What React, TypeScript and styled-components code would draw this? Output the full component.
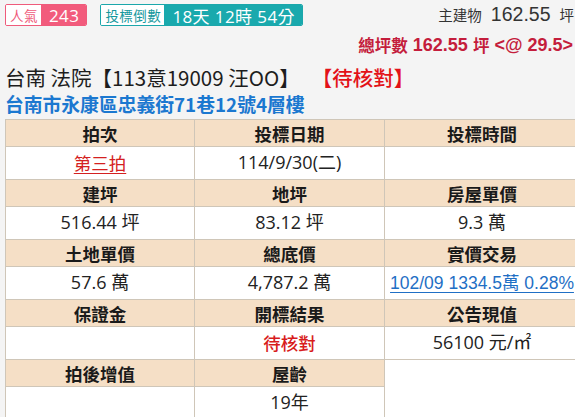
import React from "react";
import styled, { createGlobalStyle } from "styled-components";

const Global = createGlobalStyle`
  html, body { margin: 0; padding: 0; background: #f4f4f4; }
  body { font-family: "Noto Sans CJK TC", "Open Sans", sans-serif; color: #222; overflow: hidden; }
`;

const Page = styled.div`
  padding: 4px 0 0 5px;
  width: 570px;
`;

const TopRow = styled.div`
  display: flex;
  align-items: flex-start;
  justify-content: space-between;
  height: 23px;
`;

const Badges = styled.div`
  display: flex;
  gap: 13px;
`;

const Badge = styled.div<{ $color: string }>`
  display: flex;
  align-items: stretch;
  height: 22px;
  border: 1px solid ${(p) => p.$color};
  border-radius: 2px;
  box-sizing: border-box;
  overflow: hidden;
`;

const BadgeLabel = styled.span<{ $color: string }>`
  display: flex;
  align-items: center;
  padding: 0 3px 0 4px;
  background: #fff;
  color: ${(p) => p.$color};
  font-size: 13.5px;
  letter-spacing: 0.5px;
`;

const BadgeValue = styled.span<{ $color: string }>`
  display: flex;
  align-items: center;
  padding: 0 7px 0 8px;
  background: ${(p) => p.$color};
  color: #fff;
  font-family: "Open Sans", "Noto Sans CJK TC", sans-serif;
  font-size: 17px;
  letter-spacing: 0.4px;
`;

const Cjk = styled.span<{ $size: number }>`
  font-family: "Noto Sans CJK TC", sans-serif;
  font-size: ${(p) => p.$size}px;
`;

const MainArea = styled.div`
  font-family: "Liberation Sans", "Noto Sans CJK TC", sans-serif;
  font-size: 19.5px;
  line-height: 20px;
  color: #333;
  white-space: nowrap;
  margin-right: 1px;
`;

const Gap = styled.span`
  display: inline-block;
  width: 9px;
`;

const TotalRow = styled.div`
  display: flex;
  justify-content: flex-end;
  align-items: center;
  height: 28px;
  margin-top: 4px;
  margin-right: 2px;
  white-space: nowrap;
  font-family: "Liberation Sans", "Noto Sans CJK TC", sans-serif;
  font-size: 18px;
  font-weight: bold;
  color: #c41d3c;
`;

const Title = styled.div`
  display: flex;
  align-items: center;
  height: 28px;
  margin-top: 4px;
  font-size: 20.5px;
  color: #1d1d1d;
  white-space: nowrap;
`;

const Status = styled.span`
  color: #e31218;
  margin-left: 12px;
  font-weight: 500;
`;

const Address = styled.div`
  height: 24px;
  display: flex;
  align-items: center;
  font-size: 18.8px;
  font-weight: bold;
  color: #1b78d0;
  white-space: nowrap;
`;

const Table = styled.table`
  border-collapse: collapse;
  width: 574px;
  table-layout: fixed;
  margin-top: 4px;
  line-height: 1.2;
`;

const Th = styled.th`
  background: #f5dfc6;
  border: 1px solid #cfc6b8;
  height: 26px;
  padding: 0;
  font-size: 17.5px;
  font-weight: bold;
  color: #1a1a1a;
  text-align: center;
`;

const Td = styled.td<{ $tone?: "red" | "redBold" }>`
  background: #fff;
  border: 1px solid #cfc6b8;
  height: 32px;
  padding: 0;
  text-align: center;
  font-family: "Open Sans", "Noto Sans CJK TC", sans-serif;
  font-size: 18px;
  color: ${(p) => (p.$tone ? "#d81c1c" : "#222")};
  font-weight: ${(p) => (p.$tone === "redBold" ? 500 : 400)};
`;

const EmptyTd = styled.td`
  background: #fff;
  border: 1px solid #cfc6b8;
  border-right: none;
  border-bottom: none;
`;

const RedLink = styled.span`
  color: #d42020;
  font-family: "Noto Sans CJK TC", sans-serif;
  font-size: 17.5px;
  text-decoration: underline;
  text-underline-offset: 3px;
`;

const StatusCell = styled.span`
  font-family: "Noto Sans CJK TC", sans-serif;
  font-size: 17.5px;
`;

const BlueLink = styled.span`
  color: #1f6fc5;
  text-decoration: underline;
  text-underline-offset: 3px;
  font-family: "Liberation Sans", "Noto Sans CJK TC", sans-serif;
  font-size: 17.5px;
`;

export default function App() {
  return (
    <>
      <Global />
      <Page>
        <TopRow>
          <Badges>
            <Badge $color="#ef5b7b">
              <BadgeLabel $color="#ef5b7b">人氣</BadgeLabel>
              <BadgeValue $color="#f25b7c">243</BadgeValue>
            </Badge>
            <Badge $color="#1ba7ab">
              <BadgeLabel $color="#16989d">投標倒數</BadgeLabel>
              <BadgeValue $color="#19a9ad">18天 12時 54分</BadgeValue>
            </Badge>
          </Badges>
          <MainArea>
            <Cjk $size={14.5}>主建物</Cjk>
            <Gap />162.55<Gap />
            <Cjk $size={14.5}>坪</Cjk>
          </MainArea>
        </TopRow>
        <TotalRow>
          <Cjk $size={16.5}>總坪數</Cjk>&nbsp;162.55&nbsp;<Cjk $size={16.5}>坪</Cjk>&nbsp;&lt;@ 29.5&gt;
        </TotalRow>
        <Title>
          台南 法院【113意19009 汪OO】<Status>【待核對】</Status>
        </Title>
        <Address>台南市永康區忠義街71巷12號4層樓</Address>
        <Table>
          <colgroup>
            <col style={{ width: 189 }} />
            <col style={{ width: 190 }} />
            <col style={{ width: 195 }} />
          </colgroup>
          <tbody>
            <tr>
              <Th>拍次</Th>
              <Th>投標日期</Th>
              <Th>投標時間</Th>
            </tr>
            <tr>
              <Td>
                <RedLink>第三拍</RedLink>
              </Td>
              <Td>114/9/30(二)</Td>
              <Td></Td>
            </tr>
            <tr>
              <Th>建坪</Th>
              <Th>地坪</Th>
              <Th>房屋單價</Th>
            </tr>
            <tr>
              <Td>516.44 坪</Td>
              <Td>83.12 坪</Td>
              <Td>9.3 萬</Td>
            </tr>
            <tr>
              <Th>土地單價</Th>
              <Th>總底價</Th>
              <Th>實價交易</Th>
            </tr>
            <tr>
              <Td>57.6 萬</Td>
              <Td>4,787.2 萬</Td>
              <Td>
                <BlueLink>102/09 1334.5萬 0.28%</BlueLink>
              </Td>
            </tr>
            <tr>
              <Th>保證金</Th>
              <Th>開標結果</Th>
              <Th>公告現值</Th>
            </tr>
            <tr>
              <Td></Td>
              <Td $tone="redBold">
                <StatusCell>待核對</StatusCell>
              </Td>
              <Td>56100 元/㎡</Td>
            </tr>
            <tr>
              <Th>拍後增值</Th>
              <Th>屋齡</Th>
              <EmptyTd rowSpan={2}></EmptyTd>
            </tr>
            <tr>
              <Td></Td>
              <Td>19年</Td>
            </tr>
          </tbody>
        </Table>
      </Page>
    </>
  );
}
